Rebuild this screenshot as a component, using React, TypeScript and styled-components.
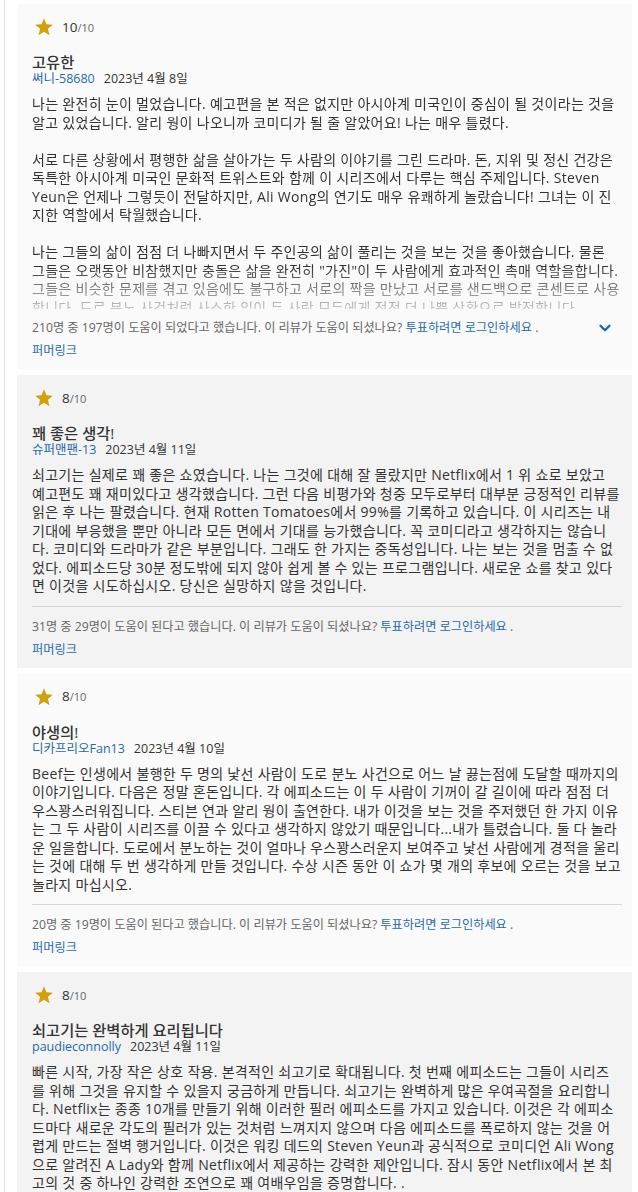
import React from "react";
import styled, { createGlobalStyle } from "styled-components";
import { ChevronDown } from "lucide-react";

const GlobalStyle = createGlobalStyle`
  html, body { margin: 0; padding: 0; background: #ffffff; }
  body {
    font-family: "Open Sans", "Noto Sans CJK KR", sans-serif;
    color: #333333;
  }
`;

const Page = styled.div`
  margin-left: 4px;
  border-left: 1px solid #e3e3e3;
  padding: 4px 6px 0 12px;
  min-height: 1192px;
  display: flex;
  flex-direction: column;
  gap: 6px;
`;

const Card = styled.article<{ $odd: boolean }>`
  background: ${(p) => (p.$odd ? "#fafafa" : "#f3f3f3")};
  padding: 13px 10px 9px 15px;
  display: flex;
  flex-direction: column;
`;

const RatingRow = styled.div`
  display: flex;
  align-items: center;
  gap: 8px;
  height: 20px;
  padding-left: 2px;
`;

const RatingValue = styled.span`
  font-size: 13.5px;
  color: #333333;
  line-height: 20px;
`;

const RatingScale = styled.span`
  font-size: 11px;
  color: #666666;
`;

const Title = styled.h3`
  margin: 16px 0 0;
  font-size: 15.3px;
  line-height: 18px;
  font-weight: 500;
  color: #333333;
`;

const Byline = styled.div`
  font-size: 12.5px;
  line-height: 15px;
  display: flex;
  gap: 9px;
`;

const Link = styled.a`
  color: #1f6aad;
  text-decoration: none;
`;

const DateText = styled.span`
  color: #333333;
`;

const Body = styled.div<{ $clipped: boolean }>`
  margin-top: 9px;
  font-size: 14px;
  letter-spacing: 0.3px;
  line-height: 18.5px;
  color: #333333;
  ${(p) =>
    p.$clipped
      ? `max-height: 214px; overflow: hidden;
         -webkit-mask-image: linear-gradient(to bottom, #000 80%, rgba(0,0,0,0.25) 100%);
         mask-image: linear-gradient(to bottom, #000 80%, rgba(0,0,0,0.25) 100%);`
      : ""}
`;

const Paragraph = styled.p`
  margin: 0;
  & + & { margin-top: 18.5px; }
`;

const Divider = styled.hr`
  margin: 10px 0 0;
  border: none;
  border-top: 1px solid #d6d6d6;
  height: 0;
`;

const HelpfulRow = styled.div<{ $tight: boolean }>`
  margin-top: ${(p) => (p.$tight ? "10px" : "11px")};
  display: flex;
  align-items: center;
  justify-content: space-between;
  font-size: 12.2px;
  line-height: 18px;
  color: #666666;
`;

const Expand = styled.span`
  display: flex;
  color: #1f6aad;
  margin-right: 8px;
`;

const Permalink = styled.div`
  margin-top: 5px;
  font-size: 12.2px;
  line-height: 18px;
`;

const Star = () => (
  <svg width="20" height="20" viewBox="0 0 24 24" aria-hidden="true">
    <polygon
      points="12,1.5 14.9,8.6 22.6,9.2 16.7,14.2 18.6,21.8 12,17.7 5.4,21.8 7.3,14.2 1.4,9.2 9.1,8.6"
      fill="#d2a00f"
    />
  </svg>
);

type Review = {
  rating: number;
  title: string;
  author: string;
  date: string;
  paragraphs: string[];
  helpful: string;
  clipped?: boolean;
};

const reviews: Review[] = [
  {
    rating: 10,
    title: "고유한",
    author: "써니-58680",
    date: "2023년 4월 8일",
    clipped: true,
    paragraphs: [
      "나는 완전히 눈이 멀었습니다. 예고편을 본 적은 없지만 아시아계 미국인이 중심이 될 것이라는 것을 알고 있었습니다. 알리 웡이 나오니까 코미디가 될 줄 알았어요! 나는 매우 틀렸다.",
      "서로 다른 상황에서 평행한 삶을 살아가는 두 사람의 이야기를 그린 드라마. 돈, 지위 및 정신 건강은 독특한 아시아계 미국인 문화적 트위스트와 함께 이 시리즈에서 다루는 핵심 주제입니다. Steven Yeun은 언제나 그렇듯이 전달하지만, Ali Wong의 연기도 매우 유쾌하게 놀랐습니다! 그녀는 이 진지한 역할에서 탁월했습니다.",
      "나는 그들의 삶이 점점 더 나빠지면서 두 주인공의 삶이 풀리는 것을 보는 것을 좋아했습니다. 물론 그들은 오랫동안 비참했지만 충돌은 삶을 완전히 \"가진\"이 두 사람에게 효과적인 촉매 역할을합니다. 그들은 비슷한 문제를 겪고 있음에도 불구하고 서로의 짝을 만났고 서로를 샌드백으로 콘센트로 사용합니다. 도로 분노 사건처럼 사소한 일이 두 사람 모두에게 점점 더 나쁜 상황으로 발전합니다.",
    ],
    helpful: "210명 중 197명이 도움이 되었다고 했습니다. 이 리뷰가 도움이 되셨나요? ",
  },
  {
    rating: 8,
    title: "꽤 좋은 생각!",
    author: "슈퍼맨팬-13",
    date: "2023년 4월 11일",
    paragraphs: [
      "쇠고기는 실제로 꽤 좋은 쇼였습니다. 나는 그것에 대해 잘 몰랐지만 Netflix에서 1 위 쇼로 보았고 예고편도 꽤 재미있다고 생각했습니다. 그런 다음 비평가와 청중 모두로부터 대부분 긍정적인 리뷰를 읽은 후 나는 팔렸습니다. 현재 Rotten Tomatoes에서 99%를 기록하고 있습니다. 이 시리즈는 내 기대에 부응했을 뿐만 아니라 모든 면에서 기대를 능가했습니다. 꼭 코미디라고 생각하지는 않습니다. 코미디와 드라마가 같은 부분입니다. 그래도 한 가지는 중독성입니다. 나는 보는 것을 멈출 수 없었다. 에피소드당 30분 정도밖에 되지 않아 쉽게 볼 수 있는 프로그램입니다. 새로운 쇼를 찾고 있다면 이것을 시도하십시오. 당신은 실망하지 않을 것입니다.",
    ],
    helpful: "31명 중 29명이 도움이 된다고 했습니다. 이 리뷰가 도움이 되셨나요? ",
  },
  {
    rating: 8,
    title: "야생의!",
    author: "디카프리오Fan13",
    date: "2023년 4월 10일",
    paragraphs: [
      "Beef는 인생에서 불행한 두 명의 낯선 사람이 도로 분노 사건으로 어느 날 끓는점에 도달할 때까지의 이야기입니다. 다음은 정말 혼돈입니다. 각 에피소드는 이 두 사람이 기꺼이 갈 길이에 따라 점점 더 우스꽝스러워집니다. 스티븐 연과 알리 웡이 출연한다. 내가 이것을 보는 것을 주저했던 한 가지 이유는 그 두 사람이 시리즈를 이끌 수 있다고 생각하지 않았기 때문입니다...내가 틀렸습니다. 둘 다 놀라운 일을합니다. 도로에서 분노하는 것이 얼마나 우스꽝스러운지 보여주고 낯선 사람에게 경적을 울리는 것에 대해 두 번 생각하게 만들 것입니다. 수상 시즌 동안 이 쇼가 몇 개의 후보에 오르는 것을 보고 놀라지 마십시오.",
    ],
    helpful: "20명 중 19명이 도움이 된다고 했습니다. 이 리뷰가 도움이 되셨나요? ",
  },
  {
    rating: 8,
    title: "쇠고기는 완벽하게 요리됩니다",
    author: "paudieconnolly",
    date: "2023년 4월 11일",
    paragraphs: [
      "빠른 시작, 가장 작은 상호 작용. 본격적인 쇠고기로 확대됩니다. 첫 번째 에피소드는 그들이 시리즈를 위해 그것을 유지할 수 있을지 궁금하게 만듭니다. 쇠고기는 완벽하게 많은 우여곡절을 요리합니다. Netflix는 종종 10개를 만들기 위해 이러한 필러 에피소드를 가지고 있습니다. 이것은 각 에피소드마다 새로운 각도의 필러가 있는 것처럼 느껴지지 않으며 다음 에피소드를 폭로하지 않는 것을 어렵게 만드는 절벽 행거입니다. 이것은 워킹 데드의 Steven Yeun과 공식적으로 코미디언 Ali Wong으로 알려진 A Lady와 함께 Netflix에서 제공하는 강력한 제안입니다. 잠시 동안 Netflix에서 본 최고의 것 중 하나인 강력한 조연으로 꽤 여배우임을 증명합니다. .",
    ],
    helpful: "15명 중 12명이 도움이 된다고 했습니다. 이 리뷰가 도움이 되셨나요? ",
  },
];

const ReviewCard = ({ review, odd }: { review: Review; odd: boolean }) => (
  <Card $odd={odd}>
    <RatingRow>
      <Star />
      <RatingValue>
        {review.rating}
        <RatingScale>/10</RatingScale>
      </RatingValue>
    </RatingRow>
    <Title>{review.title}</Title>
    <Byline>
      <Link href="#">{review.author}</Link>
      <DateText>{review.date}</DateText>
    </Byline>
    <Body $clipped={!!review.clipped}>
      {review.paragraphs.map((p, i) => (
        <Paragraph key={i}>{p}</Paragraph>
      ))}
    </Body>
    {!review.clipped && <Divider />}
    <HelpfulRow $tight={!!review.clipped}>
      <span>
        {review.helpful}
        <Link href="#">투표하려면 로그인하세요</Link> .
      </span>
      {review.clipped && (
        <Expand>
          <ChevronDown size={18} strokeWidth={3.2} />
        </Expand>
      )}
    </HelpfulRow>
    <Permalink>
      <Link href="#">퍼머링크</Link>
    </Permalink>
  </Card>
);

export default function App() {
  return (
    <>
      <GlobalStyle />
      <Page>
        {reviews.map((r, i) => (
          <ReviewCard key={i} review={r} odd={i % 2 === 0} />
        ))}
      </Page>
    </>
  );
}
